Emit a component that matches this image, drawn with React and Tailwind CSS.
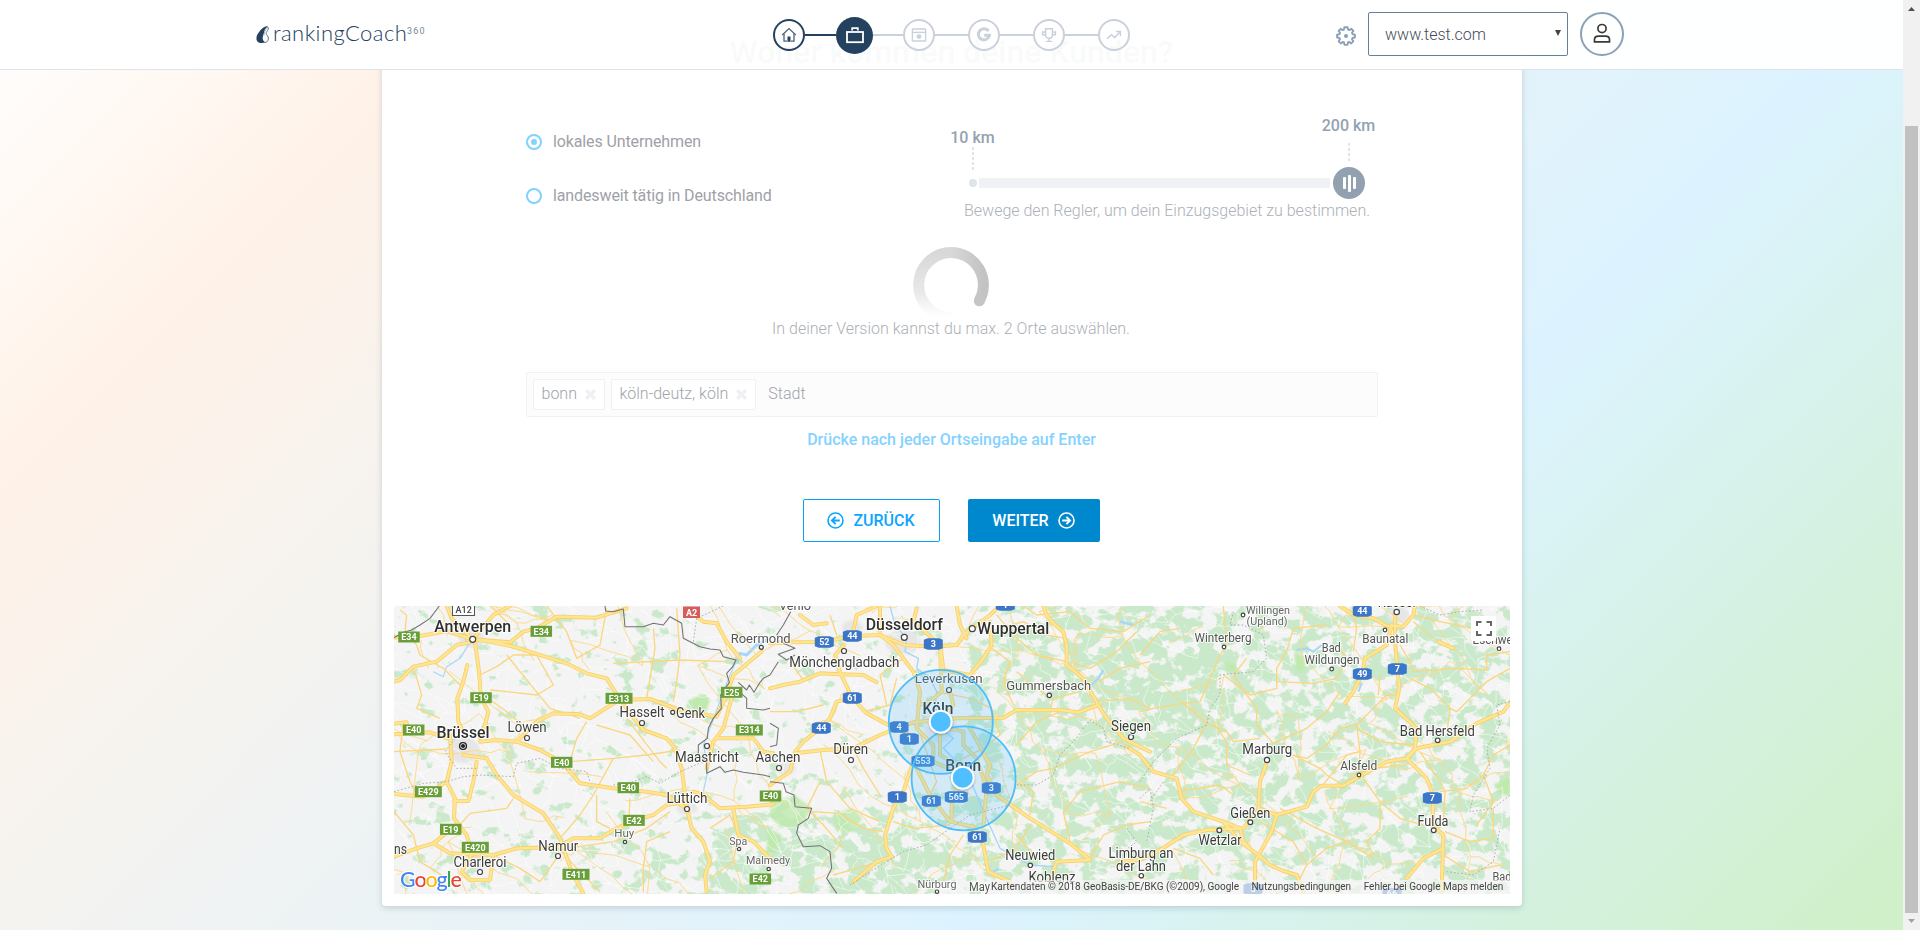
import React from "react";

const NAVY = "#24425f";
const PALE = "#c9d1dc";

/* ---------- map data ---------- */

const WEST_ROADS = [
  "M42 127 L120 123 200 108 278 133 390 142 430 110 470 100 530 65 650 68 740 40",
  "M42 260 L60 255 100 215 170 200 230 150 278 140",
  "M278 133 L340 60 390 33",
  "M200 33 L215 70 278 133",
  "M278 133 L320 138 400 155 560 205 620 235 680 250 717 310 770 380 790 405 860 430 885 460 905 520 921 642 935 700 970 740 990 800 975 840 980 890",
  "M285 140 L297 230 303 308 325 350 315 390 300 430",
  "M262 210 L250 260 232 310 235 380 249 410",
  "M210 420 L215 500 200 560 225 610 222 670 260 720 275 770",
  "M42 386 L80 382 80 412 M42 418 L150 412 200 430",
  "M300 440 L350 435 410 440 480 465 545 502 570 530 600 565 700 580 800 590 860 600 921 642",
  "M410 440 L470 380 520 355 600 358 630 370 717 315 810 312 900 345 1010 365 1040 300 1060 240 1144 170",
  "M250 480 L320 490 350 540 400 600 440 625 490 655 540 730 575 830 610 895",
  "M42 597 L130 605 200 560",
  "M222 618 L265 618 280 560 290 500",
  "M42 785 L110 760 160 745 212 703",
  "M160 745 L210 775 340 780 410 760 535 757 580 730 660 730 700 705 762 676 820 660 860 630 921 620",
  "M275 780 L245 830 270 855 330 855 340 780",
  "M940 590 L970 600 1020 640 1100 635 1180 628",
  "M980 520 L1000 440 1030 400 1060 290",
  "M1010 430 L1120 430 1150 470 1180 475",
  "M945 60 L970 80 1010 85 1040 140 1080 190",
  "M1060 640 L1075 720 1120 740 1180 800",
];

const MID_ROADS = [
  "M0 280 L40 270 90 260 150 235 210 238 280 240 320 262",
  "M222 150 L195 180 210 232 247 309 290 355 355 390 440 430",
  "M247 309 L200 320 180 370 150 400 100 440 75 470 60 530 0 570",
  "M75 475 L160 465 250 460 330 420 430 382 560 370 700 368 740 345 870 345 925 352 985 330 1010 370 1060 430 1140 470",
  "M0 145 L60 142 160 141 247 123 330 120 403 150 490 155 560 150 580 120 660 60 690 33",
  "M90 60 L130 90 170 85 M247 123 L260 60 320 33",
  "M330 33 L330 120 370 150 400 190 430 230 450 290 440 400 490 450 490 490",
  "M440 40 L430 80 510 150 515 290 480 320 445 330",
  "M560 33 L570 90 590 130 M510 140 L520 225 600 240 640 190 665 150 660 80",
  "M820 33 L830 60 850 85 880 110 890 150 890 210 940 250 985 330",
  "M430 500 L400 590 370 640 345 720 350 760 365 785 320 800 250 860",
  "M440 520 L480 600 540 680 610 695 640 750 655 830 720 860",
  "M540 400 L580 410 580 450 620 490 650 580 640 690",
  "M600 400 L660 510 650 540 680 600 780 670 900 745 960 795 860 800 840 860",
  "M510 380 L510 480 560 510 580 545 545 620 545 680",
  "M512 380 L550 330 540 290",
  "M490 500 L590 545",
];

const EAST_ROADS = [
  "M-40 455 L0 480 40 530 110 550 125 610 160 650 250 680 300 740 355 780 390 810 430 828 470 840 490 890",
  "M381 500 L360 560 355 640 410 660 500 635 520 590 545 572 610 572 657 545 740 500 800 490 830 460 930 440 1010 385 1090 350 1112 320",
  "M410 660 L395 710 345 800 345 890",
  "M-60 800 L0 795 60 765 130 720 200 705 310 700 355 645",
  "M600 33 L640 60 700 70 740 92 790 95 820 60 825 33",
  "M755 90 L740 150 675 190 667 237 640 290 615 325",
  "M765 60 L765 140 772 222 778 280 765 340 830 400 825 460 800 490 860 550 880 600 878 690 910 720 905 890",
  "M910 760 L850 790 800 850",
  "M895 140 L940 160",
  "M250 680 L300 700 310 740 330 760",
];

const WEST_MINOR = [
  "M60 45 L80 60 75 110 110 150 120 180 190 220 240 270",
  "M300 240 L350 215 400 180 470 180 520 270 470 300 380 290 330 285",
  "M330 33 L390 90 M500 33 L560 110 590 190 660 150 680 40",
  "M820 100 L825 160 810 250 800 310",
  "M890 40 L900 180 890 260 880 320",
  "M700 205 L900 195 1040 200",
  "M325 310 L380 350 440 400 M380 180 L510 340 600 370",
  "M100 215 L125 300 110 340 180 370",
  "M42 470 L200 462 M70 380 L60 470 90 560 110 600",
  "M570 500 L700 490 800 480 900 465",
  "M570 500 L590 430 620 380",
  "M700 490 L640 600 600 660 540 730",
  "M270 655 L380 640 400 610 M230 700 L270 655",
  "M650 600 L650 680 690 700 M750 610 L745 700",
  "M870 710 L800 740 790 820 790 890",
  "M340 780 L420 820 480 860 530 790",
  "M535 760 L600 830 660 890 M560 760 L700 740 800 700 870 650",
  "M990 700 L1050 660 1075 720 1060 800 990 850",
  "M42 650 L100 720 120 800 200 850",
  "M740 370 L840 500 860 520 M650 390 L750 420 820 500",
];

const MID_MINOR = [
  "M690 100 L760 80 830 120 890 130 M680 60 L740 130 800 180 890 200",
  "M665 160 L720 200 700 260 730 330",
  "M840 345 L850 310 930 290 M740 230 L800 280 840 310",
  "M985 320 L1080 310 1140 340 M985 260 L1050 220 1140 200",
  "M740 450 L800 380 870 350 M740 570 L800 530 850 520 960 470 1060 440",
  "M780 660 L790 590 740 560 M900 740 L880 650 930 590 1050 560 1140 580",
  "M960 790 L1000 720 1070 690 1140 680 M860 800 L790 780 740 720",
  "M0 350 L80 350 160 330 M280 350 L360 330 380 250",
  "M250 460 L280 520 330 600 M150 465 L170 560 240 640 330 680",
  "M150 560 L110 640 160 690 220 760 M370 680 L430 700 540 690",
  "M400 190 L330 240 350 330 M60 200 L100 255 M180 60 L200 120",
  "M120 650 L210 655 280 700 340 710 M190 840 L260 820 330 800",
  "M445 400 L500 560 460 640 M500 290 L600 310 665 340 690 420 640 460 560 500",
  "M760 33 L800 60 900 50 960 100 1060 110 1140 60",
  "M900 200 L960 220 1040 170 1100 110",
  "M580 720 L540 780 520 860 M660 800 L740 760 780 690",
];

const EAST_MINOR = [
  "M0 350 L40 340 130 325 180 320 240 180 260 150 250 33",
  "M0 180 L60 110 120 100 M130 325 L200 385 260 410 280 440 360 430",
  "M200 385 L160 460 100 540 M225 390 L260 440 260 510 330 540",
  "M320 190 L280 240 320 300 350 340 350 390 400 445 500 400 560 350 600 290",
  "M250 240 L330 300 410 280 410 220 440 170 460 100 560 90",
  "M410 260 L520 265 590 250 620 190 600 160",
  "M460 480 L500 490 560 450 600 400 650 390 740 300 770 300",
  "M640 170 L650 100 640 60 M720 240 L715 300 M650 390 L660 470 657 540",
  "M650 400 L720 440 820 450 M460 480 L540 520 560 540 610 570",
  "M780 150 L810 200 820 230 950 220 1040 225 1040 180 1110 170",
  "M810 250 L870 280 930 340 950 350 1040 260 1110 220",
  "M930 340 L920 420 M820 80 L880 130 M820 60 L900 80 1000 100",
  "M800 510 L700 520 640 540 M670 550 L720 620 780 670 850 690",
  "M720 630 L720 700 680 740 700 780 M420 640 L530 700 620 740 700 790",
  "M900 590 L980 580 1030 540 1060 480 1110 450 M1030 540 L1060 620 1010 690",
  "M915 710 L990 740 1060 730 1060 640 M910 780 L990 830 1080 810",
  "M110 590 L240 570 280 600 M0 620 L80 640 M360 680 L460 740 500 810 480 850",
  "M620 740 L560 760 500 810 M100 760 L180 790 220 840",
  "M840 470 L900 560 915 590 910 680 M545 575 L620 480 660 470",
];

const BORDERS_WEST = [
  "M42 128 L70 112 95 105 120 90 150 70 178 33",
  "M675 33 L677 48 700 50 730 42 735 95 790 95 820 85 850 90 870 65 905 85 910 130 960 155 990 162 1020 165 1030 185 1068 195 1058 215 1040 235 1048 262 1022 300 1024 340 1000 370 985 400 982 430 955 450 955 480 980 500 980 535 1020 515 1035 532 1060 525 1090 532 1150 540 1170 545",
  "M1075 262 L1100 285 1108 270 1122 292 1140 262 1150 250 1170 240",
  "M1078 290 L1100 310 1100 340 1150 345 1170 340",
];
const BORDERS_MID = [
  "M62 50 L40 90 20 120 45 130 40 145 75 160 25 178 50 195 75 180 M25 200 L0 240",
  "M0 385 L25 400 20 450 0 455",
  "M0 560 L40 565 48 590 72 600 75 635 125 640 115 670 85 690 80 715 100 755 150 752 180 770 185 820 170 850 200 895",
];
const DOTTED = [
  ["w", "M42 590 L130 565 200 560 250 545 300 540 400 545 410 505 480 490 540 520 620 530 630 560"],
  ["w", "M700 570 L760 560 800 545 840 565 900 530 970 500"],
  ["w", "M225 430 L195 470 230 520 290 520 M940 140 L950 70 1030 33"],
  ["m", "M740 570 L800 570 850 540 870 480 910 440 960 375 1000 400 1010 440 1080 460"],
  ["m", "M240 870 L300 830 400 770 470 750 540 700 600 660 720 630"],
  ["m", "M1070 700 L1100 740 1060 770 M1140 620 L1180 560"],
  ["e", "M0 560 L40 500 110 430 200 390 210 340 240 300 240 240 340 230 380 190 370 120 310 90 270 90 280 50"],
  ["e", "M840 33 L900 60 960 50 1030 45 M1110 320 L1070 330 1080 390 1040 460 1050 520 1000 600 990 650 1060 640 1110 600"],
  ["e", "M920 830 L1000 840 1060 800 1080 700 M0 610 L30 580 40 640 20 740"],
];

const GREEN_SHIELDS = [
  [409, 637, "E34"], [541.3, 631.3, "E34"], [481, 697.7, "E19"], [619, 698.3, "E313"], [731.7, 692.3, "E25"],
  [413.7, 730, "E40"], [561.7, 762.3, "E40"], [749.3, 730, "E314"], [428.3, 791.7, "E429"], [628.3, 787.7, "E40"],
  [634, 820.3, "E42"], [450.7, 829.3, "E19"], [475.3, 847.3, "E420"], [576, 874.3, "E411"], [760.3, 879, "E42"],
  [770.5, 796, "E40"],
];
const BLUE_SHIELDS = [
  [824.3, 642, "52"], [852.3, 636, "44"], [933.3, 644, "3"], [1005.3, 605, "1"], [852.3, 698, "61"],
  [821.3, 728, "44"], [899, 727, "4"], [909.3, 739, "1"], [923, 761, "553"], [991.3, 788, "3"],
  [956.3, 797, "565"], [931.3, 801, "61"], [897.3, 797, "1"], [977.3, 837, "61"], [1362.3, 611, "44"],
  [1362.3, 674, "49"], [1397.3, 669, "7"], [1432.3, 798, "7"], [1253, 889, "5"], [1392, 894, "66"],
];
/* x, baseline, text, style, width */
const LABELS = [
  [472.7, 631.7, "Antwerpen", "L", 77], [463, 738, "Brüssel", "L", 53], [904.3, 630.3, "Düsseldorf", "L", 77],
  [1013.3, 634.3, "Wuppertal", "L", 72], [938, 714.3, "Köln", "L", 31], [963.3, 771.3, "Bonn", "L", 36],
  [760.7, 642.7, "Roermond", "S", 60], [642, 716.7, "Hasselt", "M", 45], [690.5, 717.7, "Genk", "M", 29],
  [527, 732, "Löwen", "M", 39], [707, 762, "Maastricht", "M", 64], [687, 802.7, "Lüttich", "M", 41],
  [624.3, 837.3, "Huy", "XS", 20], [558.3, 851, "Namur", "M", 40], [480, 866.7, "Charleroi", "M", 53],
  [400.5, 853.7, "ns", "M", 13], [738.3, 845, "Spa", "XS", 18], [768, 863.7, "Malmedy", "XS", 44],
  [795, 610, "Venlo", "S", 32], [844.3, 667, "Mönchengladbach", "M", 110], [850.7, 753.7, "Düren", "M", 35],
  [778, 762, "Aachen", "M", 45], [948.7, 683, "Leverkusen", "S", 68], [1048.7, 689.6, "Gummersbach", "S", 85],
  [1131, 731.3, "Siegen", "M", 40], [1030.3, 860, "Neuwied", "M", 50], [1052, 882, "Koblenz", "M", 47],
  [1141, 858, "Limburg an", "M", 65], [1141, 870.8, "der Lahn", "M", 50], [937, 887.6, "Nürburg", "XS", 39],
  [979.5, 891, "May", "S", 21], [1268, 613.6, "Willingen", "XS", 44], [1267, 624.6, "(Upland)", "XS", 41],
  [1223, 642.3, "Winterberg", "S", 57], [1331.3, 652, "Bad", "S", 19], [1332, 664.3, "Wildungen", "S", 55],
  [1385.3, 643.3, "Baunatal", "S", 46], [1396.7, 607.3, "Kassel", "M", 38], [1499, 644, "Eschwege", "S", 53],
  [1437.3, 736, "Bad Hersfeld", "M", 75], [1267.3, 754.3, "Marburg", "M", 50], [1358.7, 770.3, "Alsfeld", "S", 37],
  [1250.3, 818, "Gießen", "M", 40], [1433, 826, "Fulda", "M", 31], [1220, 845, "Wetzlar", "M", 43],
  [1502, 881, "Bad", "S", 19],
];
const LABEL_STYLE = {
  L: { size: 16, weight: 500, fill: "#2f2f2f" },
  M: { size: 14, weight: 400, fill: "#3c3c3c" },
  S: { size: 12.5, weight: 400, fill: "#545454" },
  XS: { size: 11.5, weight: 400, fill: "#666" },
};
const DOTS = [
  [472.7, 639.3, 3], [904.3, 637.3, 3], [972.3, 628.7, 3], [761.3, 647.3, 2], [642, 723, 2.5], [672.7, 712.3, 2],
  [527, 738, 2.5], [707, 746, 2.5], [687, 809, 2.5], [625, 842, 1.7], [558, 856, 2.5], [480, 872, 2.5], [739, 849, 1.7],
  [768.7, 869, 1.7], [844, 651, 2.5], [851, 760, 2.5], [779, 768, 2.5], [949, 690, 2.5], [1049.3, 695.3, 2.2],
  [1131, 737, 2.5], [1030.3, 865.3, 2.2], [1141.3, 875.7, 2.2], [937, 891.7, 1.7], [1243, 615, 1.8], [1224, 647, 1.8],
  [1331.7, 669, 1.8], [1385, 630, 1.8], [1396.7, 612, 2.7], [1499, 648.7, 1.8], [1437.7, 740.3, 2.3], [1267, 760, 2.6],
  [1359, 775, 1.8], [1250.3, 822.3, 2.4], [1433.7, 830.3, 2.4], [1219.3, 830.3, 2.4],
];
/* woodland density: cx, cy, rx, ry, opacity */
const WOODS = [
  [650, 650, 28, 40, 0.24], [640, 675, 20, 14, 0.25], [700, 705, 18, 12, 0.3], [480, 762, 14, 14, 0.35],
  [520, 750, 40, 12, 0.2], [700, 885, 70, 26, 0.4], [745, 865, 50, 55, 0.5], [790, 830, 40, 30, 0.5],
  [520, 625, 50, 16, 0.2], [580, 618, 60, 12, 0.2], [850, 860, 60, 45, 0.5], [900, 870, 70, 40, 0.45],
  [880, 800, 30, 26, 0.2], [985, 800, 30, 24, 0.12], [990, 720, 20, 50, 0.14], [1060, 720, 90, 110, 0.22],
  [1050, 640, 60, 40, 0.1], [1130, 680, 90, 90, 0.32], [1180, 690, 70, 60, 0.36], [1180, 800, 100, 60, 0.2],
  [1080, 850, 80, 40, 0.2], [1260, 650, 80, 60, 0.25], [1340, 700, 80, 80, 0.12], [1430, 700, 90, 80, 0.12],
  [1340, 820, 100, 60, 0.16], [1460, 800, 70, 90, 0.16], [1260, 770, 80, 60, 0.1], [1460, 640, 60, 40, 0.2],
  [560, 860, 60, 30, 0.24], [640, 850, 40, 30, 0.28], [440, 880, 50, 20, 0.24],
];

function seeded(seed) {
  let s = seed;
  return () => {
    s = (s * 16807) % 2147483647;
    return s / 2147483647;
  };
}

/* local lanes: a jittered lattice whose neighbours are joined by wiggly lines */
function lanes(seed, step, keep) {
  const rnd = seeded(seed);
  const cols = Math.ceil(1160 / step) + 1;
  const rows = Math.ceil(330 / step) + 1;
  const pts = [];
  for (let r = 0; r < rows; r++) {
    for (let c = 0; c < cols; c++) {
      pts.push([380 + c * step + (rnd() - 0.5) * step, 596 + r * step + (rnd() - 0.5) * step]);
    }
  }
  let d = "";
  const join = (a, b) => {
    if (rnd() > keep) return;
    d += `M${a[0].toFixed(1)} ${a[1].toFixed(1)}`;
    for (let k = 1; k <= 4; k++) {
      const t = k / 4;
      const j = k === 4 ? 0 : step * 0.16;
      d += `L${(a[0] + (b[0] - a[0]) * t + (rnd() - 0.5) * j).toFixed(1)} ${(a[1] + (b[1] - a[1]) * t + (rnd() - 0.5) * j).toFixed(1)}`;
    }
  };
  for (let r = 0; r < rows - 1; r++) {
    for (let c = 0; c < cols - 1; c++) {
      const i = r * cols + c;
      join(pts[i], pts[i + 1]);
      join(pts[i], pts[i + cols]);
      join(pts[i], pts[i + cols + 1]);
    }
  }
  return d;
}
const WHITE_LANES = lanes(77, 19, 0.5);
const YELLOW_LANES = lanes(4211, 42, 0.3);

const W = "translate(380 595) scale(.33333)";
const M = "translate(770 595) scale(.33333)";
const E = "translate(1140 595) scale(.33333)";

function Roads({ stroke, width }) {
  return (
    <g fill="none" stroke={stroke} strokeWidth={width} strokeLinejoin="round" strokeLinecap="round">
      <g transform={W}>{WEST_ROADS.map((d) => <path key={d} d={d} />)}</g>
      <g transform={M}>{MID_ROADS.map((d) => <path key={d} d={d} />)}</g>
      <g transform={E}>{EAST_ROADS.map((d) => <path key={d} d={d} />)}</g>
    </g>
  );
}

function MapDrawing() {
  return (
    <svg className="block h-[288px] w-[1116px]" viewBox="394 606 1116 288">
      <defs>
        <filter id="woods" filterUnits="userSpaceOnUse" x="394" y="606" width="1116" height="288" colorInterpolationFilters="sRGB">
          <feGaussianBlur in="SourceGraphic" stdDeviation="9" result="density" />
          <feTurbulence type="fractalNoise" baseFrequency="0.06 0.075" numOctaves="4" seed="8" result="noise" />
          <feComposite in="noise" in2="density" operator="arithmetic" k1="0" k2="1" k3="0.34" k4="-0.2" result="sum" />
          <feComponentTransfer in="sum" result="cut">
            <feFuncA type="linear" slope="11" intercept="-4.75" />
          </feComponentTransfer>
          <feFlood floodColor="#c9e9ca" />
          <feComposite in2="cut" operator="in" />
        </filter>
        <filter id="soft" x="-30%" y="-30%" width="160%" height="160%">
          <feGaussianBlur stdDeviation="1.3" />
        </filter>
      </defs>
      <rect x="394" y="606" width="1116" height="288" fill="#f4f4f4" />
      <g filter="url(#woods)">
        {WOODS.map(([cx, cy, rx, ry, o], i) => (
          <ellipse key={i} cx={cx} cy={cy} rx={rx} ry={ry} fill="#000" opacity={o} />
        ))}
        <path d="M960 606 H1510 V894 H820 L900 800 L980 780 Z" fill="#000" opacity="0.42" />
      </g>
      <g fill="#bfe9ad" filter="url(#soft)">
        <path d="M690 700 l12 -6 8 6 -4 12 -12 4 z" />
        <path d="M770 800 l26 -4 16 12 -10 16 -22 4 -10 -12 z" opacity="0.8" />
        <path d="M834 814 l18 -6 10 10 -6 12 -20 2 z" opacity="0.8" />
        <path d="M768 828 l14 8 -6 16 -10 2 z" />
        <path d="M1294 652 l10 4 2 14 -10 2 z" />
        <path d="M1494 784 l16 -6 v18 l-12 -2 z" />
        <path d="M1226 662 l10 2 -2 8 -8 -2 z" />
      </g>
      <g fill="#e6e6e6" filter="url(#soft)">
        <ellipse cx="471" cy="638" rx="13" ry="10" />
        <ellipse cx="464" cy="750" rx="16" ry="13" />
        <ellipse cx="903" cy="642" rx="18" ry="12" />
        <ellipse cx="940" cy="725" rx="16" ry="17" />
        <ellipse cx="687" cy="808" rx="10" ry="7" />
        <ellipse cx="786" cy="768" rx="10" ry="7" />
        <ellipse cx="852" cy="628" rx="10" ry="8" />
        <ellipse cx="1398" cy="615" rx="11" ry="8" />
        <ellipse cx="962" cy="778" rx="9" ry="10" />
        <ellipse cx="480" cy="862" rx="13" ry="7" />
      </g>
      <path d={WHITE_LANES} fill="none" stroke="#fff" strokeWidth="0.9" opacity="0.6" />
      <g fill="none" stroke="#a8d5fa" strokeLinejoin="round">
        <g transform={W} strokeWidth="3.5">
          <path d="M205 33 L210 70 240 100 260 140 M268 145 L240 190 200 215 190 245 160 230 M1068 200 L1050 240 1030 290 1005 360 990 400 970 450 985 520 970 590" />
          <path d="M1170 130 L1130 150 1100 180 1080 175 1070 205" strokeWidth="9" />
        </g>
        <g transform={M} strokeWidth="4">
          <path d="M360 33 L375 90 410 130 405 170 445 190 440 220 480 250 500 290 495 340 520 370 525 410 550 430 520 460 560 500 590 530 620 600 645 660 690 760 780 810 850 815" />
          <path d="M1000 225 L985 250 965 270 M1050 80 L1090 90 M670 830 L685 822" strokeWidth="7" />
        </g>
        <g transform={E} strokeWidth="4">
          <path d="M470 165 L500 160 520 170 545 150 M655 290 L665 265" strokeWidth="6" />
        </g>
      </g>
      <path d={YELLOW_LANES} fill="none" stroke="#fbd984" strokeWidth="0.9" />
      <g fill="none" stroke="#fad67f" strokeLinejoin="round" strokeWidth="4">
        <g transform={W}>{WEST_MINOR.map((d) => <path key={d} d={d} />)}</g>
        <g transform={M}>{MID_MINOR.map((d) => <path key={d} d={d} />)}</g>
        <g transform={E}>{EAST_MINOR.map((d) => <path key={d} d={d} />)}</g>
      </g>
      <Roads stroke="#f7d06c" width="12" />
      <Roads stroke="#ffe592" width="7" />
      <g fill="none" stroke="#737373" strokeWidth="3.2" strokeLinejoin="round">
        <g transform={W}>{BORDERS_WEST.map((d) => <path key={d} d={d} />)}</g>
        <g transform={M}>{BORDERS_MID.map((d) => <path key={d} d={d} />)}</g>
      </g>
      <g fill="none" stroke="#a5a5a5" strokeWidth="2.6" strokeDasharray="5 6">
        {DOTTED.map(([k, d]) => (
          <path key={d} d={d} transform={k === "w" ? W : k === "m" ? M : E} />
        ))}
      </g>
      {DOTS.map(([x, y, r], i) => (
        <circle key={i} cx={x} cy={y} r={r} fill="#fff" stroke="#444" strokeWidth="1.2" />
      ))}
      <circle cx="463" cy="746" r="3.4" fill="#fff" stroke="#222" strokeWidth="1.4" />
      <circle cx="463" cy="746" r="2.1" fill="#222" />
      <g fontFamily="Roboto, sans-serif" textAnchor="middle" stroke="#fff" strokeOpacity="0.8" strokeWidth="2.2" strokeLinejoin="round" paintOrder="stroke">
        {LABELS.map(([x, y, t, k, w]) => (
          <text key={t + x} x={x} y={y} fontSize={LABEL_STYLE[k].size} fontWeight={LABEL_STYLE[k].weight} fill={LABEL_STYLE[k].fill} textLength={w} lengthAdjust="spacingAndGlyphs">
            {t}
          </text>
        ))}
      </g>
      <g fontFamily="Roboto, sans-serif" textAnchor="middle" fontWeight="700" fontSize="9" fill="#fff">
        {GREEN_SHIELDS.map(([x, y, t], i) => {
          const w = t.length > 3 ? 27 : 21.5;
          return (
            <g key={i}>
              <rect x={x - w / 2} y={y - 5.5} width={w} height="11" fill="#689f38" />
              <text x={x} y={y + 3.3}>{t}</text>
            </g>
          );
        })}
        {BLUE_SHIELDS.map(([x, y, t], i) => {
          const w = t.length > 2 ? 11.5 : 9.5;
          return (
            <g key={i}>
              <path d={`M${x - w} ${y - 4.2} L${x - w + 4} ${y - 5.8} H${x + w - 4} L${x + w} ${y - 4.2} V${y + 4.2} L${x + w - 4} ${y + 5.8} H${x - w + 4} L${x - w} ${y + 4.2} Z`} fill="#3b76c9" />
              <text x={x} y={y + 3.3}>{t}</text>
            </g>
          );
        })}
        <rect x="683" y="606.5" width="17" height="11.5" fill="#d75d5d" />
        <text x="691.5" y="615.6">A2</text>
        <rect x="452.5" y="603.5" width="22" height="12" fill="#fff" stroke="#555" />
        <text x="463.7" y="613.2" fill="#444" fontWeight="500">A12</text>
      </g>
      <g fill="#4fc0ff" fillOpacity="0.2" stroke="#4fbdf8" strokeWidth="1.8">
        <circle cx="940.8" cy="721.8" r="52" />
        <circle cx="963.6" cy="778.3" r="52" />
      </g>
      <g fill="#4fbfff" stroke="#fff" strokeWidth="2">
        <ellipse cx="941" cy="723" rx="12" ry="12" fill="#000" fillOpacity="0.22" stroke="none" filter="url(#soft)" />
        <ellipse cx="963" cy="779" rx="12" ry="12" fill="#000" fillOpacity="0.22" stroke="none" filter="url(#soft)" />
        <circle cx="940.7" cy="721.7" r="11" />
        <circle cx="962.7" cy="777.7" r="11" />
      </g>
      <text x="400" y="886.6" fontFamily="Lato, sans-serif" fontSize="21.5" fontWeight="500" textLength="62" stroke="#fff" strokeWidth="2" paintOrder="stroke">
        <tspan fill="#4285f4">G</tspan><tspan fill="#ea4335">o</tspan><tspan fill="#fbbc05">o</tspan><tspan fill="#4285f4">g</tspan><tspan fill="#34a853">l</tspan><tspan fill="#ea4335">e</tspan>
      </text>
      <rect x="990" y="880" width="520" height="14" fill="#f5f5f5" opacity="0.7" />
      <g fontFamily="Roboto, sans-serif" fontSize="10" fill="#444">
        <text x="991" y="890" textLength="248">Kartendaten © 2018 GeoBasis-DE/BKG (©2009), Google</text>
        <text x="1251.5" y="890" textLength="99.5">Nutzungsbedingungen</text>
        <text x="1363.7" y="890" textLength="139.5">Fehler bei Google Maps melden</text>
      </g>
      <rect x="1471" y="616" width="25" height="25" rx="1" fill="#fff" />
      <path d="M1477 626 V622 H1481.5 M1486.5 622 H1491 V626 M1491 631 V635 H1486.5 M1481.5 635 H1477 V631" fill="none" stroke="#666" strokeWidth="2" />
    </svg>
  );
}

/* ---------- header ---------- */

function Logo() {
  return (
    <div className="flex w-[180px] items-center">
      <svg className="-mt-px h-[19px] w-[16px] shrink-0" viewBox="0 0 16 19">
        <path d="M13 1 C8.5 1 5.5 5 3 8.5 C0.7 11.7 0.3 18 6.2 18 C8 18 9.2 17.6 10 17 C7 15 7.4 12.5 8.5 9.5 C9.5 6.7 9.4 3.4 13 1 Z" fill={NAVY} />
        <path d="M10.4 3 C12.6 1.4 13.7 2.2 13.3 4 C12.9 5.8 10.9 7 11.2 8.6 C11.6 10.3 13.6 11 13.4 13.8 C13.3 16.2 11.5 17.5 9.3 17.6" fill="none" stroke="#5b7488" strokeWidth="1" />
        <path d="M11.6 3.4 C10 5 9.3 8 9 10.4" fill="none" stroke="#8fa0ae" strokeWidth="0.8" />
      </svg>
      <span className="-mt-[3px] ml-[2px] w-[131px] whitespace-nowrap font-['Lato',sans-serif] text-[22px] leading-[26px] font-light tracking-[0.45px] text-[#1d3d5c]">rankingCoach</span>
      <span className="-mt-[8px] ml-[3px] text-[9px] leading-[10px] tracking-[1.2px] text-[#76879a]">360</span>
    </div>
  );
}

function HomeIcon() {
  return (
    <svg className="h-[16px] w-[16px]" viewBox="0 0 16 16" fill="none" stroke="#4b647c" strokeWidth="1.3">
      <path d="M1.2 8 L8 1.6 L14.8 8" />
      <path d="M3 7 V14.2 H6 M10 14.2 H13 V7" />
      <path d="M8 9.5 V14.8" stroke="#24425f" strokeWidth="3" />
    </svg>
  );
}
function CaseIcon() {
  return (
    <svg className="h-[18px] w-[18px]" viewBox="0 0 18 18" fill="none" stroke="#fff">
      <rect x="1" y="6" width="16" height="10.2" strokeWidth="1.8" />
      <path d="M6.2 4.6 V2.2 H11.8 V4.6" strokeWidth="1.8" />
    </svg>
  );
}
function BrowserIcon() {
  return (
    <svg className="h-[16px] w-[16px]" viewBox="0 0 16 16" fill="none" stroke={PALE} strokeWidth="1.4">
      <rect x="1.4" y="2" width="13.2" height="12" rx="0.6" />
      <path d="M1.4 5.4 H14.6" />
      <circle cx="8" cy="9.6" r="2.4" fill={PALE} stroke="none" />
    </svg>
  );
}
function GIcon() {
  return (
    <svg className="h-[16px] w-[16px]" viewBox="0 0 16 16" fill="none" stroke={PALE} strokeWidth="3">
      <path d="M12.6 4.1 A5.6 5.6 0 1 0 13.5 8.3 H8.2" />
    </svg>
  );
}
function CupIcon() {
  return (
    <svg className="h-[16px] w-[16px]" viewBox="0 0 16 16" fill="none" stroke={PALE} strokeWidth="1.4">
      <path d="M4.6 1.7 H11.4 V8.5 C11.4 10 10.2 11.3 8 11.3 C5.8 11.3 4.6 10 4.6 8.5 Z" />
      <path d="M4.6 5 H1.6 V7.8 H4.6 M11.4 5 H14.4 V7.8 H11.4 M5 14.4 H11 M8 11.3 V14" />
    </svg>
  );
}
function TrendIcon() {
  return (
    <svg className="h-[16px] w-[16px]" viewBox="0 0 16 16" fill="none" stroke={PALE} strokeWidth="1.5">
      <path d="M1 11.6 L5.5 7.8 L8.6 10.6 L14 5" />
      <path d="M10 4.6 H14.4 V9" />
    </svg>
  );
}

function Step({ children }) {
  return <div className="flex h-8 w-8 shrink-0 items-center justify-center rounded-full border-2 border-[#c9d1dc]">{children}</div>;
}
function Link() {
  return <div className="h-[2px] w-[33px] shrink-0 bg-[#c9d1dc]" />;
}

function Header() {
  return (
    <header className="absolute inset-x-0 top-0 z-10 flex h-[70px] border-b border-[#dfe3ea] bg-white/97">
      <div className="flex w-[773px] items-center pl-[255px]">
        <Logo />
      </div>
      <div className="flex w-[560px] items-center pt-px">
        <div className="flex h-8 w-8 shrink-0 items-center justify-center rounded-full border-2 border-[#24425f]"><HomeIcon /></div>
        <div className="h-[2px] w-[31px] shrink-0 bg-[#24425f]" />
        <div className="flex h-[37px] w-[37px] shrink-0 items-center justify-center rounded-full bg-[#24425f]"><CaseIcon /></div>
        <div className="h-[2px] w-[30px] shrink-0 bg-[#c9d1dc]" />
        <Step><BrowserIcon /></Step>
        <Link />
        <Step><GIcon /></Step>
        <Link />
        <Step><CupIcon /></Step>
        <Link />
        <Step><TrendIcon /></Step>
      </div>
      <div className="flex items-center">
        <svg className="mt-[2px] ml-[3px] h-[20px] w-[20px]" viewBox="0 0 20 20" fill="none" stroke="#8aa0b5" strokeWidth="1.9" strokeLinejoin="round">
          <path d="M8.4 1.2 H11.6 L12.1 3.6 L13.4 4.1 L15.4 2.8 L17.4 4.9 L16 6.8 L16.5 8.2 L18.9 8.6 V11.5 L16.5 12 L16 13.3 L17.3 15.3 L15.2 17.4 L13.3 16 L12 16.5 L11.5 18.9 H8.5 L8 16.5 L6.7 16 L4.8 17.4 L2.7 15.3 L4 13.3 L3.5 12 L1.1 11.5 V8.6 L3.5 8.2 L4 6.8 L2.6 4.9 L4.7 2.8 L6.6 4.1 L7.9 3.6 Z" />
          <circle cx="10" cy="10" r="2" fill="#8aa0b5" stroke="none" />
        </svg>
        <div className="-mt-px ml-[12px] flex h-[44px] w-[200px] items-center justify-between rounded-[2px] border border-[#66809a] pr-[6px] pl-4">
          <span className="pt-[2px] text-[16px] font-light text-[#444b58]">www.test.com</span>
          <svg className="-mt-[3px] h-[6px] w-[6px]" viewBox="0 0 6 6"><path d="M0 0 H6 L3 6 Z" fill="#444" /></svg>
        </div>
        <div className="-mt-px ml-3 flex h-[44px] w-[44px] items-center justify-center rounded-full border-2 border-[#8aa0b5]">
          <svg className="-mt-[3px] h-[20px] w-[18px]" viewBox="0 0 18 20" fill="none" stroke="#3a3a3a" strokeWidth="1.7">
            <circle cx="9" cy="5.6" r="4.1" />
            <path d="M1.5 18.8 V16.6 C1.5 14.4 3.4 13.2 5.5 13.2 H12.5 C14.6 13.2 16.5 14.4 16.5 16.6 V18.8 Z" />
          </svg>
        </div>
      </div>
    </header>
  );
}

/* ---------- form ---------- */

function Radio({ checked, children }) {
  return (
    <div className="flex h-6 items-center">
      <div className="flex h-4 w-4 items-center justify-center rounded-full border-2 border-[#80d2ff]">
        {checked && <div className="h-[6px] w-[6px] rounded-full bg-[#80d2ff]" />}
      </div>
      <span className="ml-[11px] text-[16px] tracking-[-0.12px] text-[#a0a1a8]">{children}</span>
    </div>
  );
}

function Dashes({ count }) {
  return (
    <div className="flex flex-col gap-[2px]">
      {Array.from({ length: count }, (_, i) => (
        <div key={i} className="h-[3px] w-[2px] bg-[#e1e4ea]" />
      ))}
    </div>
  );
}

function Distance() {
  return (
    <div className="mr-[2px] flex w-[426px] flex-col pt-[44px]">
      <div className="flex h-[53px] justify-between text-[16px] leading-[24px] font-medium text-[#93a2b2]">
        <div className="flex w-[45px] flex-col items-center gap-[-2px] pt-[12px]">
          <span className="h-[21px] whitespace-nowrap">10 km</span>
          <Dashes count={5} />
        </div>
        <div className="flex w-[55px] flex-col items-center">
          <span className="mb-[5px] whitespace-nowrap">200 km</span>
          <Dashes count={4} />
        </div>
      </div>
      <div className="flex h-[32px] items-center pl-[19px]">
        <div className="h-[8px] w-[8px] rounded-full bg-[#dfe4ea]" />
        <div className="ml-[2px] h-[10px] w-[351px] bg-[#f0f1f5]" />
        <div className="ml-[3px] flex h-[32px] w-[32px] items-center justify-center gap-[2px] rounded-full bg-[#92a1b0]">
          <div className="h-[12px] w-[3px] rounded-[1px] bg-white" />
          <div className="h-[17px] w-[3px] rounded-[1px] bg-white" />
          <div className="h-[12px] w-[3px] rounded-[1px] bg-white" />
        </div>
      </div>
      <p className="mr-[6px] text-right text-[16px] leading-[24px] font-light whitespace-nowrap text-[#acb0b7]">Bewege den Regler, um dein Einzugsgebiet zu bestimmen.</p>
    </div>
  );
}

function Spinner() {
  return (
    <svg className="h-[78px] w-[78px] shrink-0" viewBox="0 0 78 78" fill="none" strokeWidth="11">
      <defs>
        <linearGradient id="left" x1="0" y1="1" x2="0" y2="0">
          <stop offset="0" stopColor="#fff" />
          <stop offset="0.14" stopColor="#f8f8f8" />
          <stop offset="0.4" stopColor="#e8e8e8" />
          <stop offset="1" stopColor="#d8d8d8" />
        </linearGradient>
        <linearGradient id="right" x1="0" y1="0" x2="1" y2="0">
          <stop offset="0" stopColor="#d8d8d8" />
          <stop offset="1" stopColor="#c3c3c3" />
        </linearGradient>
      </defs>
      <path d="M39.3 6.5 A32.5 32.5 0 0 0 39 71.5" stroke="url(#left)" />
      <path d="M39 6.5 A32.5 32.5 0 0 1 67.3 54.8" stroke="url(#right)" strokeLinecap="butt" />
      <circle cx="67.3" cy="54.8" r="5.5" fill="#c5c5c5" />
    </svg>
  );
}

function Tag({ children }) {
  return (
    <div className="flex h-[31px] items-center gap-[8px] rounded-[2px] border border-[#f1f1f5] bg-white pr-[8px] pl-[7.5px] text-[#a0a4ab]">
      <span className="-mt-px">{children}</span>
      <svg className="h-[11px] w-[11px]" viewBox="0 0 11 11" stroke="#eef0f5" strokeWidth="3.4"><path d="M1.2 1.2 L9.8 9.8 M9.8 1.2 L1.2 9.8" /></svg>
    </div>
  );
}

function ArrowCircle({ flip }) {
  return (
    <svg className={flip ? "h-[17px] w-[17px] rotate-180" : "h-[17px] w-[17px]"} viewBox="0 0 17 17" fill="none" stroke="currentColor" strokeWidth="1.6">
      <circle cx="8.5" cy="8.5" r="7.5" />
      <path d="M12.8 8.5 H5 M8.6 4.8 L4.9 8.5 L8.6 12.2" strokeWidth="1.9" />
    </svg>
  );
}

export default function App() {
  return (
    <div className="flex h-[930px] w-[1920px] overflow-hidden font-['Roboto',sans-serif]">
      <div className="relative flex w-[1903px] items-start justify-center bg-[linear-gradient(135deg,#ffffff_0%,#fff2e8_17%,#dcf3ff_67%,#cff0c8_99%)]">
        <Header />
        <main className="ml-px flex h-[906px] w-[1140px] flex-col rounded-b-[4px] bg-white shadow-[0_2px_6px_rgba(60,80,100,0.22)]">
          <h1 className="h-[70px] pt-[34px] pr-px text-center text-[32px] leading-[36px] font-medium text-[#54585f]">Woher kommen deine Kunden?</h1>
          <div className="flex h-[160px] justify-between px-[144px]">
            <div className="flex flex-col gap-[30px] pt-[60px]">
              <Radio checked>lokales Unternehmen</Radio>
              <Radio>landesweit tätig in Deutschland</Radio>
            </div>
            <Distance />
          </div>
          <div className="flex h-[142px] flex-col items-center pt-[16px] pr-[2px]">
            <Spinner />
            <p className="-mt-[7px] text-[16px] leading-[24px] font-light text-[#acb0b7]">In deiner Version kannst du max. 2 Orte auswählen.</p>
          </div>
          <div className="mx-[144px] flex h-[45px] items-center gap-[6px] rounded-[2px] border border-[#f1f1f5] bg-[#fcfcfd] px-[6px] text-[16px] font-light">
            <Tag>bonn</Tag>
            <Tag>köln-deutz, köln</Tag>
            <span className="-mt-px ml-[6px] text-[#a0a4ab]">Stadt</span>
          </div>
          <p className="mt-[11px] pr-px text-center text-[16px] leading-[24px] font-medium text-[#85d2ff]">Drücke nach jeder Ortseingabe auf Enter</p>
          <div className="mt-[47px] flex justify-center gap-[28px] pr-[2px] text-[16px] font-medium">
            <button className="flex h-[43px] w-[137px] items-center justify-center gap-[9px] rounded-[2px] border border-[#0a9ff5] text-[#0ea5ff]">
              <ArrowCircle />
              <span>ZURÜCK</span>
            </button>
            <button className="flex h-[43px] w-[132px] items-center justify-center gap-[9px] rounded-[2px] bg-[#0088cf] text-white">
              <span>WEITER</span>
              <ArrowCircle flip />
            </button>
          </div>
          <div className="mx-3 mt-[64px] h-[288px] overflow-hidden">
            <MapDrawing />
          </div>
        </main>
      </div>
      <div className="flex w-[17px] flex-col items-center bg-[#f1f1f1]">
        <svg className="mt-[7px] h-[4px] w-[7px]" viewBox="0 0 7 4"><path d="M0 4 L3.5 0 L7 4 Z" fill="#505050" /></svg>
        <div className="mt-[115px] h-[787px] w-[13px] bg-[#c1c1c1]" />
        <svg className="mt-[6px] h-[4px] w-[7px]" viewBox="0 0 7 4"><path d="M0 0 L3.5 4 L7 0 Z" fill="#a3a3a3" /></svg>
      </div>
    </div>
  );
}
